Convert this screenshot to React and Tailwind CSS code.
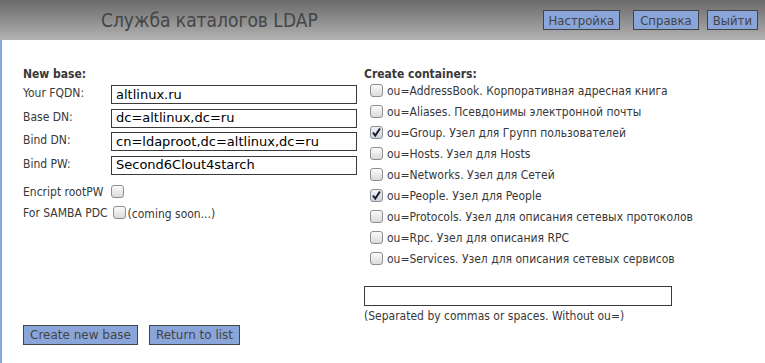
import { useState } from "react";

const containers = [
  { id: "AddressBook", text: "ou=AddressBook. Корпоративная адресная книга", checked: false },
  { id: "Aliases", text: "ou=Aliases. Псевдонимы электронной почты", checked: false },
  { id: "Group", text: "ou=Group. Узел для Групп пользователей", checked: true },
  { id: "Hosts", text: "ou=Hosts. Узел для Hosts", checked: false },
  { id: "Networks", text: "ou=Networks. Узел для Сетей", checked: false },
  { id: "People", text: "ou=People. Узел для People", checked: true },
  { id: "Protocols", text: "ou=Protocols. Узел для описания сетевых протоколов", checked: false },
  { id: "Rpc", text: "ou=Rpc. Узел для описания RPC", checked: false },
  { id: "Services", text: "ou=Services. Узел для описания сетевых сервисов", checked: false },
];

const fields = [
  { label: "Your FQDN:", value: "altlinux.ru" },
  { label: "Base DN:", value: "dc=altlinux,dc=ru" },
  { label: "Bind DN:", value: "cn=ldaproot,dc=altlinux,dc=ru" },
  { label: "Bind PW:", value: "Second6Clout4starch" },
];

const Check = ({ checked, onClick }) => (
  <span
    onClick={onClick}
    className={`inline-flex items-center justify-center w-[13px] h-[13px] shrink-0 rounded-[3px] border border-[#8e8e8e] cursor-pointer ${
      checked ? "bg-gradient-to-b from-[#eef3fa] to-[#c9d4e3]" : "bg-gradient-to-b from-[#fbfbfb] to-[#dadada]"
    }`}
  >
    {checked && (
      <svg width="11" height="11" viewBox="0 0 11 11">
        <path d="M2 5.5 L4.3 8.5 L9 1.5" fill="none" stroke="#1d1d1d" strokeWidth="2" />
      </svg>
    )}
  </span>
);

const btn = "bg-[#8aa5da] border border-[#444] text-[#444] leading-none cursor-pointer";

export default function App() {
  const [checks, setChecks] = useState(containers.map((c) => c.checked));
  const [rootPw, setRootPw] = useState(false);
  const [samba, setSamba] = useState(false);

  const toggle = (i) => setChecks((prev) => prev.map((v, j) => (j === i ? !v : v)));

  return (
    <div className="w-[765px] h-[363px] overflow-hidden bg-white font-['DejaVu_Sans_Condensed','DejaVu_Sans',sans-serif] text-[#383838]">
      {/* Header */}
      <div className="h-[40px] bg-gradient-to-b from-[#6a6a6a] to-[#b3b3b3] flex items-center">
        <div className="ml-[101px] text-[19px] text-[#454545] flex-1 leading-none">Служба каталогов LDAP</div>
        <div className="flex gap-[13px] mr-[7px] text-[13px]">
          <button className={`${btn} h-[20px] px-[5px]`}>Настройка</button>
          <button className={`${btn} h-[20px] px-[6px] mr-[-5px]`}>Справка</button>
          <button className={`${btn} h-[20px] px-[5px]`}>Выйти</button>
        </div>
      </div>

      {/* Body */}
      <div className="border-l-2 border-[#86a6e4] h-[323px] pl-[21px] pt-[27px] text-[12px]">
        <div className="flex">
          {/* New base */}
          <div className="w-[341px] flex flex-col">
            <div className="font-bold leading-[14px] mb-[4px]">New base:</div>
            <div className="flex flex-col gap-[4.5px]">
              {fields.map((f) => (
                <div key={f.label} className="flex items-start">
                  <div className="w-[88px] leading-[14px] pt-[1px]">{f.label}</div>
                  <input
                    defaultValue={f.value}
                    className="w-[246px] h-[19px] border border-[#3a3a3a] px-[4px] text-[13px] text-black font-['DejaVu_Sans',sans-serif] outline-none"
                  />
                </div>
              ))}
            </div>
            <div className="flex items-center mt-[8px] h-[18px]">
              <span className="leading-[14px] mr-[8px]">Encript rootPW</span>
              <Check checked={rootPw} onClick={() => setRootPw(!rootPw)} />
            </div>
            <div className="flex items-center mt-[3px] h-[18px]">
              <span className="leading-[14px] mr-[5px]">For SAMBA PDC</span>
              <Check checked={samba} onClick={() => setSamba(!samba)} />
              <span className="ml-[2px] leading-[14px] mt-[3px]">(coming soon...)</span>
            </div>
          </div>

          {/* Containers */}
          <div className="flex flex-col">
            <div className="font-bold leading-[14px] mb-[-1px]">Create containers:</div>
            <div className="flex flex-col">
              {containers.map((c, i) => (
                <div key={c.id} className="flex items-center h-[21px] pl-[6px]">
                  <Check checked={checks[i]} onClick={() => toggle(i)} />
                  <span className="ml-[4px] leading-[14px]">{c.text}</span>
                </div>
              ))}
            </div>
            <input className="mt-[17px] w-[308px] h-[20px] border border-[#3a3a3a] outline-none" />
            <div className="leading-[14px] mt-[3px]">(Separated by commas or spaces. Without ou=)</div>
          </div>
        </div>

        <div className="flex gap-[11px] mt-[2px] text-[12px]">
          <button className={`${btn} h-[20px] px-[6px] font-['DejaVu_Sans',sans-serif]`}>Create new base</button>
          <button className={`${btn} h-[20px] px-[6px] font-['DejaVu_Sans',sans-serif]`}>Return to list</button>
        </div>
      </div>
    </div>
  );
}
